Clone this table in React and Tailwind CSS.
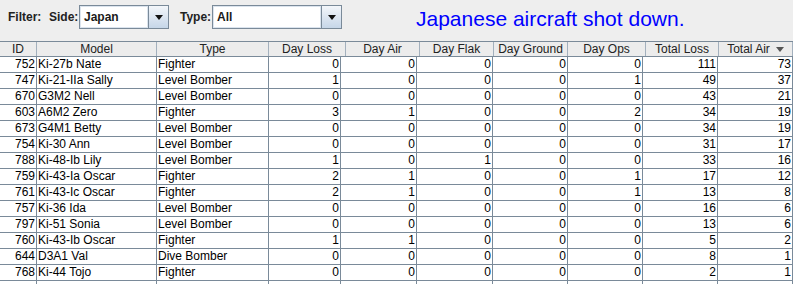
import React from "react";

const rows = [
  ["752", "Ki-27b Nate", "Fighter", 0, 0, 0, 0, 0, 111, 73],
  ["747", "Ki-21-IIa Sally", "Level Bomber", 1, 0, 0, 0, 1, 49, 37],
  ["670", "G3M2 Nell", "Level Bomber", 0, 0, 0, 0, 0, 43, 21],
  ["603", "A6M2 Zero", "Fighter", 3, 1, 0, 0, 2, 34, 19],
  ["673", "G4M1 Betty", "Level Bomber", 0, 0, 0, 0, 0, 34, 19],
  ["754", "Ki-30 Ann", "Level Bomber", 0, 0, 0, 0, 0, 31, 17],
  ["788", "Ki-48-Ib Lily", "Level Bomber", 1, 0, 1, 0, 0, 33, 16],
  ["759", "Ki-43-Ia Oscar", "Fighter", 2, 1, 0, 0, 1, 17, 12],
  ["761", "Ki-43-Ic Oscar", "Fighter", 2, 1, 0, 0, 1, 13, 8],
  ["757", "Ki-36 Ida", "Level Bomber", 0, 0, 0, 0, 0, 16, 6],
  ["797", "Ki-51 Sonia", "Level Bomber", 0, 0, 0, 0, 0, 13, 6],
  ["760", "Ki-43-Ib Oscar", "Fighter", 1, 1, 0, 0, 0, 5, 2],
  ["644", "D3A1 Val", "Dive Bomber", 0, 0, 0, 0, 0, 8, 1],
  ["768", "Ki-44 Tojo", "Fighter", 0, 0, 0, 0, 0, 2, 1],
];

const headers = [
  "ID",
  "Model",
  "Type",
  "Day Loss",
  "Day Air",
  "Day Flak",
  "Day Ground",
  "Day Ops",
  "Total Loss",
  "Total Air",
];

// combo box like the old Swing one
const Combo = ({ value, width }) => (
  <div
    className={`flex h-[24px] ${width} border border-[#7a8a99] bg-white`}
  >
    <div className="flex flex-1 items-center pl-[3px] text-[12px] font-bold text-[#1a1a1a] border border-[#dbe4ee]">
      {value}
    </div>
    <div className="flex w-[20px] items-center justify-center border-l border-[#7a8a99] bg-gradient-to-b from-[#f3f6fa] to-[#c6d6e8]">
      <svg width="8" height="5" viewBox="0 0 8 5">
        <path d="M0 0h8L4 5z" fill="#111" />
      </svg>
    </div>
  </div>
);

export default function App() {
  return (
    <div
      className="w-[793px] h-[284px] overflow-hidden bg-[#eeeeee] text-black"
      style={{ fontFamily: '"Liberation Sans", Arial, sans-serif' }}
    >
      {/* Filter bar */}
      <div className="flex h-[41px] items-start pt-[5px] pl-[8px]">
        <div className="flex h-[24px] items-center text-[12px] font-bold text-[#222]">
          <span className="w-[41px]">Filter:</span>
          <span className="w-[30px]">Side:</span>
        </div>
        <Combo value="Japan" width="w-[90px]" />
        <div className="ml-[11px] flex h-[24px] w-[32px] items-center text-[12px] font-bold text-[#222]">
          Type:
        </div>
        <Combo value="All" width="w-[130px]" />
        <div className="ml-[74px] mt-[2px] text-[21px] leading-[24px] text-[#0000ff]">
          Japanese aircraft shot down.
        </div>
      </div>

      {/* Table header */}
      <div className="grid h-[16px] grid-cols-[37px_120px_112px_77px_74px_74px_74px_78px_73px_74px] border-t border-b border-[#7a8a99] bg-[#ececec] text-[12px] leading-[14px] text-[#222]">
        {headers.map((h, i) => (
          <div
            key={h}
            className="flex items-center justify-center gap-[6px] border-r border-[#a3b0bd]"
          >
            {h}
            {i === 9 && (
              <svg width="8" height="5" viewBox="0 0 8 5">
                <path d="M0 0h8L4 5z" fill="#555" />
              </svg>
            )}
          </div>
        ))}
      </div>

      {/* Table body */}
      <div className="bg-white text-[12px] leading-[15px]">
        {rows.concat([["", "", "", "", "", "", "", "", "", ""]]).map((r, ri) => (
          <div
            key={ri}
            className="grid h-[16px] grid-cols-[37px_120px_112px_72px_76px_76px_75px_75px_75px_75px]"
          >
            {r.map((c, ci) => (
              <div
                key={ci}
                className={`border-r border-b border-[#7a8a99] overflow-hidden whitespace-nowrap ${
                  ci === 1 || ci === 2 ? "pl-[1px] text-left" : "pr-[1px] text-right"
                }`}
              >
                {c}
              </div>
            ))}
          </div>
        ))}
      </div>
    </div>
  );
}
